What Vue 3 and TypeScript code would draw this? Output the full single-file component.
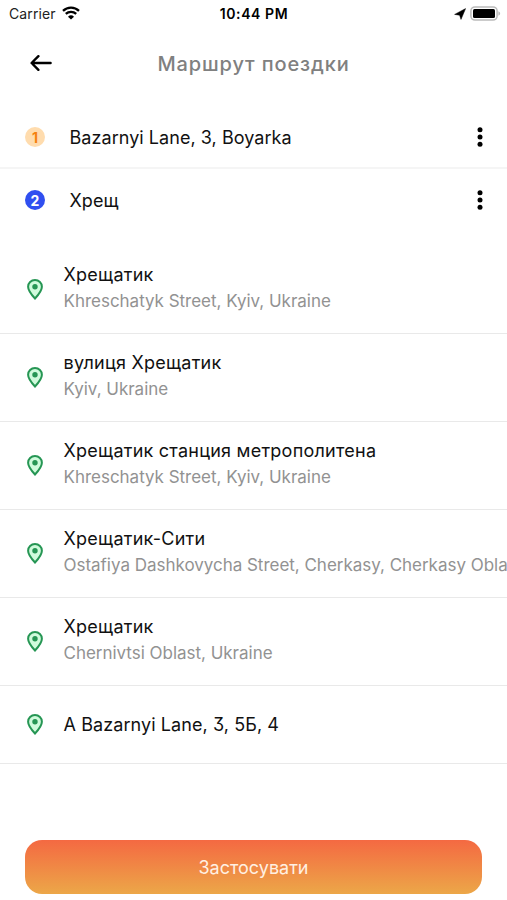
<script setup lang="ts">
interface Stop {
  id: number
  label: string
  tone: string
}

interface Place {
  id: number
  title: string
  subtitle?: string
}

const stops: Stop[] = [
  { id: 1, label: 'Bazarnyi Lane, 3, Boyarka', tone: 'start' },
  { id: 2, label: 'Хрещ', tone: 'finish' },
]

const places: Place[] = [
  { id: 1, title: 'Хрещатик', subtitle: 'Khreschatyk Street, Kyiv, Ukraine' },
  { id: 2, title: 'вулиця Хрещатик', subtitle: 'Kyiv, Ukraine' },
  { id: 3, title: 'Хрещатик станция метрополитена', subtitle: 'Khreschatyk Street, Kyiv, Ukraine' },
  { id: 4, title: 'Хрещатик-Сити', subtitle: 'Ostafiya Dashkovycha Street, Cherkasy, Cherkasy Obla' },
  { id: 5, title: 'Хрещатик', subtitle: 'Chernivtsi Oblast, Ukraine' },
  { id: 6, title: 'A Bazarnyi Lane, 3, 5Б, 4' },
]
</script>

<template>
  <main class="screen">
    <div class="status">
      <div class="status-left">
        <span class="carrier">Carrier</span>
        <svg class="wifi" viewBox="0 0 18 14" width="18" height="14">
          <path d="M1 4.9A11.6 11.6 0 0 1 17 4.9" />
          <path d="M3.8 7.9A7.6 7.6 0 0 1 14.2 7.9" />
          <path class="solid" d="M9 13.6 6 10.7a4.3 4.3 0 0 1 6 0Z" />
        </svg>
      </div>
      <span class="clock">10:44 PM</span>
      <div class="status-right">
        <svg viewBox="0 0 12 12" width="12" height="12">
          <path d="M11.6.6 7 11.400 5.600 7.200.6 6.400Z" stroke="#000" stroke-width=".5" stroke-linejoin="round" />
        </svg>
        <svg viewBox="0 0 31 15" width="31" height="15">
          <rect x=".9" y=".9" width="26.2" height="13.2" rx="4" fill="#fff" stroke="#bbb" stroke-width="1.5" />
          <rect x="3" y="3" width="22" height="9" rx="1.5" />
          <path d="M28.4 5.2c2.4 1.2 2.4 3.4 0 4.6Z" fill="#bbb" />
        </svg>
      </div>
    </div>

    <header class="header">
      <button class="back" aria-label="Назад">
        <svg viewBox="0 0 22 16" width="22" height="16">
          <path d="M20.6 8H1.8M8.4 1.2 1.6 8l6.8 6.8" />
        </svg>
      </button>
      <h1>Маршрут поездки</h1>
    </header>

    <ul class="stops">
      <li v-for="stop in stops" :key="stop.id" class="stop">
        <span class="badge" :class="stop.tone">{{ stop.id }}</span>
        <span class="stop-label">{{ stop.label }}</span>
        <svg class="more" viewBox="0 0 6 20" width="6" height="20">
          <circle cx="3" cy="2.7" r="2.5" />
          <circle cx="3" cy="10" r="2.5" />
          <circle cx="3" cy="17.3" r="2.5" />
        </svg>
      </li>
    </ul>

    <ul class="places">
      <li v-for="place in places" :key="place.id" class="place" :class="{ single: !place.subtitle }">
        <svg class="pin" viewBox="0 0 16 21" width="16" height="21">
          <path d="M8 1.1C4.1 1.1 1.1 4 1.1 7.7c0 4.1 3.4 8 6.9 11.8 3.5-3.8 6.9-7.7 6.9-11.8C14.900 4 11.900 1.100 8 1.100Z" />
          <circle cx="8" cy="7.7" r="2.7" />
        </svg>
        <div class="place-text">
          <span class="title">{{ place.title }}</span>
          <span v-if="place.subtitle" class="subtitle">{{ place.subtitle }}</span>
        </div>
      </li>
    </ul>

    <footer class="footer">
      <button class="apply">Застосувати</button>
    </footer>
  </main>
</template>

<style>
body {
  margin: 0;
  background: #fff;
}
</style>

<style scoped>
.screen {
  display: flex;
  flex-direction: column;
  box-sizing: border-box;
  width: 100%;
  height: 900px;
  overflow: hidden;
  background: #fff;
  color: #111;
  font-family: Inter, "Noto Sans", sans-serif;
}
.status {
  display: grid;
  grid-template-columns: 1fr auto 1fr;
  align-items: center;
  height: 27px;
  padding: 0 6px 0 9px;
}
.status-left,
.status-right {
  display: flex;
  align-items: center;
}
.status-left {
  gap: 6px;
}
.status-right {
  justify-content: flex-end;
  gap: 4px;
}
.carrier {
  font-size: 14px;
  letter-spacing: 0.1px;
  color: #222;
}
.wifi {
  margin-top: -2px;
  fill: none;
  stroke: #000;
  stroke-width: 2.3;
}
.wifi .solid {
  fill: #000;
  stroke: none;
}
.clock {
  margin-right: 2px;
  font-size: 14px;
  font-weight: 600;
  letter-spacing: 0.6px;
  color: #000;
}
.header {
  display: grid;
  grid-template-columns: 60px 1fr 60px;
  align-items: center;
  height: 73px;
}
.back {
  display: flex;
  padding: 0 0 2px 30px;
  border: 0;
  background: none;
}
.back svg {
  fill: none;
  stroke: #000;
  stroke-width: 2.4;
  stroke-linecap: round;
  stroke-linejoin: round;
}
h1 {
  margin: 0;
  text-align: center;
  font-size: 20px;
  font-weight: 500;
  letter-spacing: 0.87px;
  color: #808080;
}
ul {
  margin: 0;
  padding: 0;
  list-style: none;
}
.stops {
  padding-top: 7px;
  height: 146px;
  box-sizing: border-box;
}
.stop {
  display: flex;
  align-items: center;
  box-sizing: border-box;
  height: 62px;
  padding: 0 24px 0 25px;
}
.stop:first-child {
  border-bottom: 2px solid #f5f5f5;
}
.badge {
  display: flex;
  align-items: center;
  justify-content: center;
  width: 20px;
  height: 20px;
  margin-right: 24.500px;
  border-radius: 50%;
  font-size: 14px;
  font-weight: 700;
}
.badge.start {
  background: #ffdcae;
  color: #f5820f;
}
.badge.finish {
  background: #304ff0;
  color: #fff;
}
.stop-label {
  flex: 1;
  font-size: 18px;
  letter-spacing: 0.05px;
}
.place {
  display: flex;
  align-items: center;
  box-sizing: border-box;
  height: 88px;
  padding-left: 27px;
  border-bottom: 1px solid #e9e9e9;
}
.place.single {
  height: 78px;
}
.pin {
  flex: none;
  margin-right: 20.5px;
  fill: #d0fbdc;
  stroke: #269654;
  stroke-width: 2;
}
.pin circle {
  fill: #269654;
  stroke: none;
}
.place-text {
  display: flex;
  flex-direction: column;
  min-width: 0;
  padding-bottom: 3px;
  white-space: nowrap;
}
.single .place-text {
  padding-bottom: 0;
}
.title {
  font-size: 18px;
  line-height: 26px;
  letter-spacing: 0.24px;
}
.single .title {
  font-feature-settings: "cv09";
  letter-spacing: 0.08px;
}
.subtitle {
  font-size: 17px;
  line-height: 26px;
  letter-spacing: -0.02px;
  color: #929292;
}
.footer {
  margin-top: 76px;
  padding: 0 25px;
}
.apply {
  display: block;
  width: 100%;
  height: 54px;
  padding: 0;
  border: 0;
  border-radius: 17px;
  background: linear-gradient(#f46942, #eca748);
  color: #fff0e2;
  font-family: inherit;
  font-size: 18px;
}
</style>
